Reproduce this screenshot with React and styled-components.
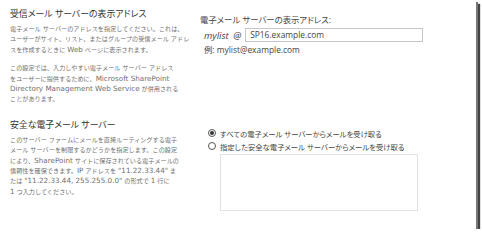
import styled, { createGlobalStyle } from "styled-components";

const GlobalStyle = createGlobalStyle`
  body {
    margin: 0;
    background: #ffffff;
    font-family: "Open Sans", "Noto Sans CJK JP", sans-serif;
    font-feature-settings: "palt";
  }
`;

const Frame = styled.div`
  width: 476px;
  height: 229px;
  background: #ffffff;
  box-shadow: 2px 2px 0 #777, 4px 4px 1px #444;
  overflow: hidden;
`;

const Section = styled.div`
  display: grid;
  grid-template-columns: 200px minmax(0, 1fr);
  padding-top: ${(p) => p.top}px;
`;

const Describe = styled.div`
  padding-left: 10px;
  min-width: 0;
`;

const Title = styled.div`
  font-size: 8.9px;
  line-height: 11px;
  color: #333;
  margin-bottom: 5px;
`;

const Desc = styled.p`
  margin: 0 0 ${(p) => (p.last ? 0 : 8)}px;
  font-family: "DejaVu Sans", "Noto Sans CJK JP", sans-serif;
  font-feature-settings: normal;
  font-size: 6.15px;
  line-height: 10.4px;
  color: #707070;
  white-space: nowrap;
`;

const Latin = styled.span`
  font-size: 7.2px;
`;

const Controls = styled.div`
  padding-top: ${(p) => p.top}px;
  font-size: 8.4px;
  color: #444;
`;

const Label = styled.div`
  line-height: 11px;
`;

const AddressRow = styled.div`
  display: flex;
  align-items: center;
  gap: 4px;
  margin-top: 3px;
  padding-left: 4px;
`;

const Alias = styled.span`
  font-style: italic;
  font-size: 9.5px;
  word-spacing: 2px;
  white-space: nowrap;
`;

const Field = styled.div`
  width: 172px;
  height: 12px;
  border: 1px solid #c6c6c6;
  padding-left: 4px;
  line-height: 12px;
  color: #444;
`;

const Example = styled.div`
  padding-left: 4px;
  margin-top: 2px;
  line-height: 11px;
`;

const RadioRow = styled.label`
  display: flex;
  align-items: center;
  gap: 4px;
  height: 13px;
  padding-left: 8px;
  font-size: 7.35px;
`;

const Radio = styled.span`
  width: 6px;
  height: 6px;
  border: 1px solid #555;
  border-radius: 50%;
  display: flex;
  align-items: center;
  justify-content: center;
  &::after {
    content: "";
    width: 4px;
    height: 4px;
    border-radius: 50%;
    background: ${(p) => (p.checked ? "#333" : "transparent")};
  }
`;

const Box = styled.div`
  width: 196px;
  height: 55px;
  margin: 1px 0 0 20px;
  border: 1px solid #e2e2e2;
`;

export default function App() {
  return (
    <>
      <GlobalStyle />
      <Frame>
        <Section top={8}>
          <Describe>
            <Title>受信メール サーバーの表示アドレス</Title>
            <Desc>
              電子メール サーバーのアドレスを指定してください。これは、<br />
              ユーザーがサイト、リスト、またはグループの受信メール アドレ<br />
              スを作成するときに <Latin>Web</Latin> ページに表示されます。
            </Desc>
            <Desc last>
              この設定では、入力しやすい電子メール サーバー アドレス<br />
              をユーザーに提供するために、<Latin>Microsoft SharePoint</Latin><br />
              <Latin>Directory Management Web Service</Latin> が併用される<br />
              ことがあります。
            </Desc>
          </Describe>
          <Controls top={6}>
            <Label>電子メール サーバーの表示アドレス:</Label>
            <AddressRow>
              <Alias>mylist @</Alias>
              <Field>SP16.example.com</Field>
            </AddressRow>
            <Example>例: mylist@example.com</Example>
          </Controls>
        </Section>
        <Section top={14}>
          <Describe>
            <Title>安全な電子メール サーバー</Title>
            <Desc last>
              このサーバー ファームにメールを直接ルーティングする電子<br />
              メール サーバーを制限するかどうかを指定します。この設定<br />
              により、<Latin>SharePoint</Latin> サイトに保存されている電子メールの<br />
              信頼性を確保できます。<Latin>IP</Latin> アドレスを <Latin>"11.22.33.44"</Latin> ま<br />
              たは <Latin>"11.22.33.44, 255.255.0.0"</Latin> の形式で <Latin>1</Latin> 行に<br />
              <Latin>1</Latin> つ入力してください。
            </Desc>
          </Describe>
          <Controls top={8}>
            <RadioRow>
              <Radio checked />
              すべての電子メール サーバーからメールを受け取る
            </RadioRow>
            <RadioRow>
              <Radio />
              指定した安全な電子メール サーバーからメールを受け取る
            </RadioRow>
            <Box />
          </Controls>
        </Section>
      </Frame>
    </>
  );
}
